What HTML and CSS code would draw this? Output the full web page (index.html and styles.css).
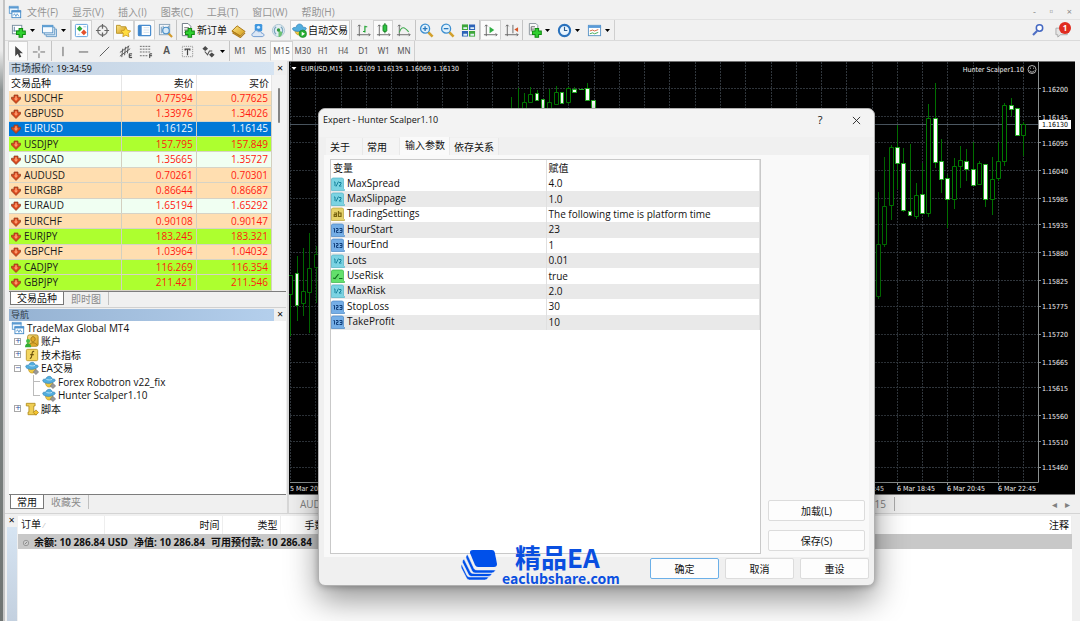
FILE: index.html
```html
<!DOCTYPE html>
<html lang="zh-CN">
<head>
<meta charset="utf-8">
<title>TradeMax Global MT4</title>
<link rel="stylesheet" href="styles.css">
</head>
<body>
<svg class="defs" aria-hidden="true">
  <defs>
    <linearGradient id="goldG" x1="0" y1="0" x2="1" y2="1"><stop offset="0" stop-color="#fbe58a"/><stop offset="1" stop-color="#d49a14"/></linearGradient>
    <symbol id="plus" viewBox="0 0 10 10"><path d="M3.300.7h3.400v2.600h2.600v3.400H6.700v2.600H3.300V6.700H.7V3.300h2.600z" fill="#2fd02f" stroke="#128a12" stroke-width="1"/></symbol>
    <symbol id="windows" viewBox="0 0 16 16"><rect x="1.500" y="1.500" width="10" height="8" fill="#eef6fd" stroke="#5c9bd1"/><path d="M1 3h11" stroke="#5c9bd1" stroke-width="2"/><rect x="4.500" y="6.500" width="10" height="8" fill="#fff" stroke="#3d84c4"/><path d="M4 7.500h11" stroke="#4f93cf" stroke-width="2"/><path d="M6 12l1.500-2L9 13l1.500-3 2 3" fill="none" stroke="#4f93cf"/></symbol>
    <symbol id="down" viewBox="0 0 10 10"><path d="M3 1h4v2.200h2.500V5L5 9.500.500 5V3.200H3z" fill="#d8481c" stroke="#8e3a1c" stroke-width=".7"/><path d="M4.200 2.200h1.600v2.300h1.400L5 7 2.800 4.500h1.400z" fill="#ff9c6e"/></symbol>
    <symbol id="ea" viewBox="0 0 16 16"><path d="M4 9c0 6 7 6 8 2V8H4z" fill="#edc844" stroke="#b98d18" stroke-width=".7"/><path d="M1 5.500c-1 3 4 4.500 8 4s6.500-2.500 6-4c-1-1.300-2.500-.8-3.500-1C11 0 5 1 4.500 4.500 3 5 1.500 4.500 1 5.500z" fill="#52aede" stroke="#2f7fb4" stroke-width=".7"/><path d="M5 5c2 1 5 .8 6.500 0" stroke="#c7e9fa" fill="none"/><path d="M12.500 9.500l3 3-3 3-3-3z" fill="#999" stroke="#6f6f6f" stroke-width=".7"/></symbol>
    <symbol id="half" viewBox="0 0 14 14"><path d="M1.500 1h10l1 1v9.500l1 1V13.500H.5V2z" fill="#7bd3e2" stroke="#55b3c6" stroke-width=".7"/><path d="M3 5h1v4M5 9.500L7.500 4.500M8 5.500h2v1.500L8 9h2.500" stroke="#17829c" fill="none"/></symbol>
    <symbol id="num" viewBox="0 0 14 14"><path d="M1.500 1h10l1 1v9.500l1 1V13.500H.5V2z" fill="#75aee6" stroke="#4a86c4" stroke-width=".7"/><path d="M2.500 5.500h1v4M5 5.500h2v2H5.500v2H7.500M8.500 5.500h2.500v4H8.500M9 7.500h2" stroke="#123f7a" fill="none"/></symbol>
    <symbol id="str" viewBox="0 0 14 14"><path d="M1.500 1h10l1 1v9.500l1 1V13.500H.5V2z" fill="#e5d26a" stroke="#b9a038" stroke-width=".7"/><path d="M3 6h2.500v3.500H3.200V7.700h2.300M7.500 4v5.500H10V6H7.500" stroke="#77620f" fill="none" stroke-width="1.200"/></symbol>
    <symbol id="bool" viewBox="0 0 14 14"><path d="M1.500 1h10l1 1v9.500l1 1V13.500H.5V2z" fill="#63e06b" stroke="#38b145" stroke-width=".7"/><path d="M2 9l2 .5L7.500 5M8 9.500h3.500" stroke="#126f20" fill="none" stroke-width="1.200"/></symbol>
  </defs>
</svg>

<div class="app">
  <nav class="menubar">
    <svg class="i14"><use href="#windows"/></svg>
    <button>文件(F)</button><button>显示(V)</button><button>插入(I)</button><button>图表(C)</button><button>工具(T)</button><button>窗口(W)</button><button>帮助(H)</button>
    <span class="winctl"><button>-</button><button>▫</button><button>×</button></span>
  </nav>

  <div class="toolbar">
    <div class="group">
      <button class="tb" aria-label="新图表"><svg class="i16" viewBox="0 0 16 16"><rect x="1.500" y="2.500" width="10" height="9" fill="#fff" stroke="#7a8f9f"/><path d="M3.500 4v5M2.500 8.500h7" stroke="#5a7f9f"/><use href="#plus" x="5" y="5" width="11" height="11"/></svg></button>
      <button class="caret" aria-label="更多"><svg viewBox="0 0 5 3"><path d="M0 0h5L2.500 3z"/></svg></button>
      <button class="tb" aria-label="配置"><svg class="i16" viewBox="0 0 16 16"><path d="M4.500 12.500v2h11v-8h-2" fill="#d5e7f5" stroke="#6b9dc7"/><path d="M2.500 10.500v2h11v-8h-2" fill="#e5f0f9" stroke="#6b9dc7"/><rect x=".5" y="2.500" width="11" height="8" fill="#f6fbff" stroke="#5590c4"/><path d="M0 3.500h12" stroke="#5d9fd4" stroke-width="2"/></svg></button>
      <button class="caret" aria-label="更多"><svg viewBox="0 0 5 3"><path d="M0 0h5L2.500 3z"/></svg></button>
    </div>
    <div class="group views">
      <button class="tb on" aria-label="市场报价"><svg class="i16" viewBox="0 0 16 16"><rect x="1.500" y="1.500" width="13" height="13" rx="1" fill="#fff" stroke="#5c9fdd"/><path d="M6 3l3 3-3 3-3-3z" fill="#2dab3f"/><path d="M10.500 7l3 3-3 3-3-3z" fill="#e4512b"/><path d="M4 12h2M10 4h3" stroke="#9fc2e2"/></svg></button>
      <button class="tb" aria-label="数据窗口"><svg class="i16" viewBox="0 0 16 16"><circle cx="8" cy="8" r="5" fill="none" stroke="#777" stroke-width="1.500"/><path d="M8 1v5M8 10v5M1 8h5M10 8h5" stroke="#666" stroke-width="1.300"/></svg></button>
      <button class="tb on" aria-label="导航"><svg class="i16" viewBox="0 0 16 16"><path d="M.5 2.500h4l1 1.500h5v7H.5z" fill="url(#goldG)" stroke="#b9942c"/><path d="M10.500 4.500l1.700 3.300 3.500.6-2.500 2.600.5 3.600-3.200-1.600-3.200 1.600.5-3.600-2.500-2.600 3.500-.6z" fill="#ffdc3e" stroke="#c4921c" stroke-width=".8"/></svg></button>
      <button class="tb on" aria-label="终端"><svg class="i16" viewBox="0 0 16 16"><rect x="1.500" y="2.500" width="13" height="11" rx="1" fill="#fff" stroke="#4a8dcf" stroke-width="1.300"/><path d="M3.500 3v10" stroke="#3f86cc" stroke-width="3"/><path d="M7 5h6M7 7.500h6M7 10h6" stroke="#d5e1ec"/></svg></button>
      <button class="tb" aria-label="测试"><svg class="i16" viewBox="0 0 16 16"><rect x="1.500" y="1.500" width="11" height="11" fill="#f5f8fb" stroke="#8aa3b8"/><path d="M3.500 4v7M5.500 3v7M11 3v3" stroke="#6f94b4"/><path d="M11 11l4 4" stroke="#d29a2c" stroke-width="2.200"/><circle cx="8.500" cy="8" r="3.500" fill="#cfe6f7" fill-opacity=".8" stroke="#4a90c9" stroke-width="1.200"/></svg></button>
    </div>
    <div class="group trade">
      <button class="tb wide"><svg class="i16" viewBox="0 0 16 16"><path d="M2.500.5h6l3 3v10h-9z" fill="#fff" stroke="#6c7681"/><path d="M4.500 5h5M4.500 7.500h4M4.500 10h3" stroke="#6b6b6b"/><use href="#plus" x="5" y="5" width="11" height="11"/></svg>新订单</button>
      <button class="tb" aria-label="编辑器"><svg class="i16" viewBox="0 0 16 16"><path d="M1 8.500L6.500 3l8.500 6-5 5z" fill="url(#goldG)" stroke="#a87410"/><path d="M1 8.500l9 5.500M1.500 10.500l8.500 5 5-5" fill="none" stroke="#b07c16" stroke-width="1.200"/></svg></button>
      <button class="tb" aria-label="云"><svg class="i16" viewBox="0 0 16 16"><rect x="4" y="1" width="8" height="8" rx="1.500" fill="#3f97df"/><circle cx="8" cy="4.500" r="1.700" fill="#d5edff"/><path d="M3 14.500c-3-.3-2.500-4 0-4 .5-3 4-3 5-1 2-1 3.500.3 3.500 1.500 3 0 3 3.300.5 3.500z" fill="#dce7f5" stroke="#6d99cf"/></svg></button>
      <button class="tb" aria-label="信号"><svg class="i16" viewBox="0 0 16 16"><circle cx="8" cy="8" r="6.500" fill="#e3edf2" stroke="#a9c3d1"/><path d="M5.500 12a5 5 0 010-8M10.500 12a5 5 0 000-8" fill="none" stroke="#7ba6c0" stroke-width="1.300"/><path d="M8 8v7c3.500-.5 4-3.500 4-5.500z" fill="#6cc274"/><circle cx="8" cy="7.500" r="1.800" fill="#329a3f"/></svg></button>
      <button class="tb wide on auto"><svg class="i16" viewBox="0 0 16 16"><path d="M3 8c1 7 9 6 10 0z" fill="#edc844" stroke="#b98d18" stroke-width=".7"/><path d="M.7 5.500c-.7 3 4 3.500 7.500 3.500s7-1 7-3.500c-1-1.300-2.500-.8-3.500-1C11 0 5 0 4.500 4.500 3 5 1.500 4.500.7 5.500z" fill="#52aede" stroke="#2f7fb4" stroke-width=".7"/><circle cx="11.500" cy="11.500" r="4" fill="#27ae32" stroke="#158220" stroke-width=".6"/><path d="M10.300 9.200l3.500 2.300-3.500 2.300z" fill="#fff"/></svg>自动交易</button>
    </div>
    <div class="group types">
      <button class="tb" aria-label="柱状图"><svg class="i16" viewBox="0 0 16 16"><path d="M3.500 2v12M1 12.500h14M2 3.500l1.500-1.500L5 3.500M13.500 11L15 12.500 13.500 14" fill="none" stroke="#666"/><path d="M9.500 3v7M9.500 4H12M7.500 9h2" stroke="#19a12c" stroke-width="1.200"/></svg></button>
      <button class="tb on" aria-label="阴阳烛"><svg class="i16" viewBox="0 0 16 16"><path d="M3.500 2v12M1 12.500h14M2 3.500l1.500-1.500L5 3.500M13.500 11L15 12.500 13.500 14" fill="none" stroke="#666"/><path d="M9.500 0v11" stroke="#137a20"/><rect x="7.500" y="2" width="4" height="7" rx="1" fill="#2ec343" stroke="#158220"/></svg></button>
      <button class="tb" aria-label="折线图"><svg class="i16" viewBox="0 0 16 16"><path d="M3.500 2v12M1 12.500h14M2 3.500l1.500-1.500L5 3.500M13.500 11L15 12.500 13.500 14" fill="none" stroke="#666"/><path d="M3.500 10C6 3 9 4 13.500 9.500" fill="none" stroke="#3eaa4d" stroke-width="1.200"/></svg></button>
    </div>
    <div class="group line">
      <button class="tb21" aria-label="放大"><svg class="i16" viewBox="0 0 16 16"><path d="M9.500 9.500l5 5" stroke="#d2a02c" stroke-width="2.800"/><circle cx="6.500" cy="6" r="4.800" fill="#e0f1fc" stroke="#3d8fd0" stroke-width="1.400"/><path d="M4 6h5M6.500 3.500v5" stroke="#2978bd" stroke-width="1.400"/></svg></button>
      <button class="tb21" aria-label="缩小"><svg class="i16" viewBox="0 0 16 16"><path d="M9.500 9.500l5 5" stroke="#d2a02c" stroke-width="2.800"/><circle cx="6.500" cy="6" r="4.800" fill="#e0f1fc" stroke="#3d8fd0" stroke-width="1.400"/><path d="M4 6h5" stroke="#2978bd" stroke-width="1.400"/></svg></button>
      <button class="tb21" aria-label="平铺"><svg class="i16" viewBox="0 0 16 16"><path d="M1 1.500h6.500v6H1z" fill="#3ea63a"/><path d="M8.500 1.500H15v6H8.500zM1 8.500h6.500v6H1z" fill="#2c62b8"/><path d="M8.500 8.500H15v6H8.500z" fill="#3ea63a"/><path d="M2.500 5.500h4M10 5.500h4M2.500 12.500h4M10 12.500h4" stroke="#dff0f3" stroke-width="2"/></svg></button>
    </div>
    <div class="group line">
      <button class="tb21 on" aria-label="自动滚动"><svg class="i16" viewBox="0 0 16 16"><path d="M3.500 2v12M1 12.500h14M2 3.500l1.500-1.500L5 3.500M13.500 11L15 12.500 13.500 14" fill="none" stroke="#666"/><path d="M7 4l5 3.500L7 11z" fill="#2fae42"/></svg></button>
      <button class="tb21" aria-label="图表平移"><svg class="i16" viewBox="0 0 16 16"><path d="M3.500 2v12M1 12.500h14M2 3.500l1.500-1.500L5 3.500M13.500 11L15 12.500 13.500 14M9.500 2v9" fill="none" stroke="#666"/><path d="M15 4.500v5l-4-2.500z" fill="#d65628"/></svg></button>
    </div>
    <div class="group line last">
      <button class="tb" aria-label="指标"><svg class="i16" viewBox="0 0 16 16"><path d="M2.500.5h7l2 2v10h-9z" fill="#f9f9f9" stroke="#8a949c"/><path d="M4.500 9V4h4M4.500 6.500h3" fill="none" stroke="#666"/><use href="#plus" x="5" y="5" width="11" height="11"/></svg></button>
      <button class="caret" aria-label="更多"><svg viewBox="0 0 5 3"><path d="M0 0h5L2.500 3z"/></svg></button>
      <button class="tb" aria-label="周期"><svg class="i16" viewBox="0 0 16 16"><circle cx="8" cy="8" r="6" fill="#e9f4fd" stroke="#2a72bd" stroke-width="2.200"/><path d="M8 4v4h3" stroke="#2d5e92" fill="none" stroke-width="1.200"/></svg></button>
      <button class="caret" aria-label="更多"><svg viewBox="0 0 5 3"><path d="M0 0h5L2.500 3z"/></svg></button>
      <button class="tb" aria-label="模板"><svg class="i16" viewBox="0 0 16 16"><rect x="1.500" y="2.500" width="13" height="11" fill="#fff" stroke="#5c94c6"/><path d="M1 4h14" stroke="#5a9bd8" stroke-width="2.500"/><path d="M3 8.500l3-1 2 1 4-1.500" stroke="#d2643c" fill="none"/><path d="M3 11.500l3-1 2 1 4-1.500" stroke="#3ea852" fill="none"/></svg></button>
      <button class="caret" aria-label="更多"><svg viewBox="0 0 5 3"><path d="M0 0h5L2.500 3z"/></svg></button>
    </div>
    <div class="tools-right">
      <button class="tb" aria-label="搜索"><svg class="i14" viewBox="0 0 14 14"><path d="M6 8l-4 4" stroke="#4f6fc4" stroke-width="2.200"/><circle cx="8.500" cy="5" r="3.200" fill="#fff" stroke="#4468c2" stroke-width="1.500"/></svg></button>
      <button class="tb note" aria-label="通知"><svg class="i16" viewBox="0 0 16 16"><path d="M1 5.500h12v7H6L3 15v-2.500H1z" fill="#e5e5e5" stroke="#aaa"/></svg><span class="badge">1</span></button>
    </div>
  </div>

  <div class="toolbar second">
    <div class="group pointers">
      <button class="tb on" aria-label="光标"><svg class="i16" viewBox="0 0 16 16"><path d="M4.500 2v11l2.700-2.500 1.800 4 2-1-1.800-3.700h3.500z" fill="#444"/></svg></button>
      <button class="tb" aria-label="十字"><svg class="i16" viewBox="0 0 16 16"><path d="M8.500 2v5M8.500 10v5M2 8.500h5M10 8.500h5" stroke="#666"/></svg></button>
    </div>
    <div class="group line draw">
      <button aria-label="垂直线"><svg class="i16" viewBox="0 0 16 16"><path d="M8.500 3v10" stroke="#555"/></svg></button>
      <button aria-label="水平线"><svg class="i16" viewBox="0 0 16 16"><path d="M3 8.500h10" stroke="#555"/></svg></button>
      <button aria-label="趋势线"><svg class="i16" viewBox="0 0 16 16"><path d="M3 13L13 3" stroke="#555"/></svg></button>
      <button aria-label="通道"><svg class="i16" viewBox="0 0 16 16"><path d="M2 9L12 2M2 13L13 5M5 5l-1 9M8 3l-1 9M11 2l-1 8" stroke="#555"/><path d="M15 10.500h-3v4h3M12 12.500h2.500" stroke="#333" fill="none"/></svg></button>
      <button aria-label="斐波纳契"><svg class="i16" viewBox="0 0 16 16"><path d="M2 2.500h12M2 5.500h12M2 8.500h12M2 12.500h8" stroke="#666" stroke-dasharray="2 1"/><path d="M12.500 15v-4.500H15M12.500 12.500H15" stroke="#333" fill="none"/></svg></button>
      <button class="glyph">A</button>
      <button aria-label="标签"><svg class="i16" viewBox="0 0 16 16"><rect x="2.500" y="2.500" width="11" height="11" fill="none" stroke="#888" stroke-dasharray="1 1"/><path d="M5 5.500h6M8 5v7M5.500 5v2M10.500 5v2" stroke="#444" stroke-width="1.300"/></svg></button>
    </div>
    <div class="group">
      <button class="tb" aria-label="箭头"><svg class="i16" viewBox="0 0 16 16"><path d="M1.500 5L4.500 2l3 3-3 2.500zM8.500 11.500l3-2.500 3 2.500-3 3z" fill="#4b4b4b"/><path d="M4 8l3 3.500 2-4 3 0" stroke="#555" stroke-width="1.200" fill="none"/></svg></button>
      <button class="caret" aria-label="更多"><svg viewBox="0 0 5 3"><path d="M0 0h5L2.500 3z"/></svg></button>
    </div>
    <div class="group line periods">
      <button>M1</button><button>M5</button><button class="on">M15</button><button>M30</button><button>H1</button><button>H4</button><button>D1</button><button>W1</button><button>MN</button>
    </div>
  </div>

  <div class="workspace">
    <aside class="side">
      <section class="panel">
        <header class="ptitle"><span class="cap">市场报价: <b>19:34:59</b></span><button class="x" aria-label="关闭">✕</button></header>
        <div class="watch">
          <table class="quotes">
            <thead><tr><th class="sym">交易品种</th><th>卖价</th><th>买价</th></tr></thead>
            <tbody>
              <tr class="or"><td><svg><use href="#down"/></svg>USDCHF</td><td>0.77594</td><td>0.77625</td></tr>
              <tr class="or"><td><svg><use href="#down"/></svg>GBPUSD</td><td>1.33976</td><td>1.34026</td></tr>
              <tr class="sel"><td><svg><use href="#down"/></svg>EURUSD</td><td>1.16125</td><td>1.16145</td></tr>
              <tr class="gr"><td><svg><use href="#down"/></svg>USDJPY</td><td>157.795</td><td>157.849</td></tr>
              <tr class="mi"><td><svg><use href="#down"/></svg>USDCAD</td><td>1.35665</td><td>1.35727</td></tr>
              <tr class="or"><td><svg><use href="#down"/></svg>AUDUSD</td><td>0.70261</td><td>0.70301</td></tr>
              <tr class="or"><td><svg><use href="#down"/></svg>EURGBP</td><td>0.86644</td><td>0.86687</td></tr>
              <tr class="mi"><td><svg><use href="#down"/></svg>EURAUD</td><td>1.65194</td><td>1.65292</td></tr>
              <tr class="or"><td><svg><use href="#down"/></svg>EURCHF</td><td>0.90108</td><td>0.90147</td></tr>
              <tr class="gr"><td><svg><use href="#down"/></svg>EURJPY</td><td>183.245</td><td>183.321</td></tr>
              <tr class="or"><td><svg><use href="#down"/></svg>GBPCHF</td><td>1.03964</td><td>1.04032</td></tr>
              <tr class="gr"><td><svg><use href="#down"/></svg>CADJPY</td><td>116.269</td><td>116.354</td></tr>
              <tr class="gr"><td><svg><use href="#down"/></svg>GBPJPY</td><td>211.421</td><td>211.546</td></tr>
            </tbody>
          </table>
          <div class="scroll"><i></i></div>
        </div>
        <div class="ptabs"><button class="cur">交易品种</button><button>即时图</button></div>
      </section>
      <section class="panel nav">
        <header class="ptitle deep"><span class="cap">导航</span><button class="x" aria-label="关闭">✕</button></header>
        <ul class="tree">
          <li><svg class="i14"><use href="#windows"/></svg>TradeMax Global MT4</li>
          <li class="l1"><span class="pm">+</span><svg class="i14" viewBox="0 0 16 16"><rect x="3" y="1" width="12" height="13" rx="2" fill="url(#goldG)" stroke="#a8841a"/><path d="M9 3c4 0 3 6 0 6s-3-6 0-6M5 13c1-4 7-4 9 0" fill="#e0a92a" stroke="#9b7412"/><circle cx="3.500" cy="8" r="2.300" fill="#44c044"/><path d="M0 15c0-6 7-6 7 0z" fill="#2fae34"/></svg>账户</li>
          <li class="l1"><span class="pm">+</span><svg class="i14" viewBox="0 0 16 16"><rect x="1.500" y="1.500" width="13" height="13" rx="1.500" fill="#f3d660" stroke="#b89628"/><path d="M10.500 4c-2-.7-2.300 1-2.500 3s-.5 5-2.500 5M6 7.500h4" fill="none" stroke="#6b520e" stroke-width="1.300"/></svg>技术指标</li>
          <li class="l1"><span class="pm">−</span><svg class="i14"><use href="#ea"/></svg>EA交易</li>
          <li class="l2"><span class="elbow"></span><svg class="i14"><use href="#ea"/></svg>Forex Robotron v22_fix</li>
          <li class="l2"><span class="elbow end"></span><svg class="i14"><use href="#ea"/></svg>Hunter Scalper1.10</li>
          <li class="l1"><span class="pm">+</span><svg class="i14" viewBox="0 0 16 16"><path d="M1.500 1.500h10v3H10v7h3v3H3.500v-3h1v-7h-3z" fill="#efce55" stroke="#b38f20"/><path d="M12.500 9l3 3-3 3-3-3z" fill="#f3c32e" stroke="#a87d14" stroke-width=".8"/></svg>脚本</li>
        </ul>
        <div class="ptabs"><button class="cur">常用</button><button>收藏夹</button></div>
      </section>
    </aside>

    <main class="chartarea">
      <svg class="chart" viewBox="289 62 786 432" preserveAspectRatio="xMaxYMin slice">
        <path class="grid" d="M290.500 62V482M315.500 62V482M341.500 62V482M366.500 62V482M391.500 62V482M417.500 62V482M442.500 62V482M467.500 62V482M492.500 62V482M518.500 62V482M543.500 62V482M568.500 62V482M594.500 62V482M619.500 62V482M644.500 62V482M669.500 62V482M695.500 62V482M720.500 62V482M745.500 62V482M771.500 62V482M796.500 62V482M821.500 62V482M846.500 62V482M872.500 62V482M897.500 62V482M922.500 62V482M947.500 62V482M973.500 62V482M998.500 62V482M1023.500 62V482"/>
        <path class="grid" d="M290 88.500H1038M290 116.500H1038M290 142.500H1038M290 170.500H1038M290 198.500H1038M290 224.500H1038M290 252.500H1038M290 280.500H1038M290 306.500H1038M290 334.500H1038M290 362.500H1038M290 387.500H1038M290 415.500H1038M290 441.500H1038M290 467.500H1038"/>
        <path class="price" d="M290 124.500H1038"/>
        <path class="wick" d="M290.500 275V336M297.500 256V321M303.500 248V316M309.500 233V333M316.500 246V303M511.500 97V108M518.500 88V108M524.500 93V108M530.500 87V103M537.500 90V100M549.500 89V108M556.500 86V104M568.500 87V104M574.500 87V92M587.500 83V100M878.500 192V299M884.500 157V247M891.500 145V220M897.500 125V189M903.500 148V212M910.500 144V215M916.500 183V219M922.500 163V214M928.500 104V217M935.500 83V168M941.500 139V193M947.500 175V228M954.500 158V209M960.500 146V188M966.500 149V181M973.500 142V186M979.500 161V185M985.500 164V207M992.500 157V215M998.500 142V181M1004.500 103V166M1011.500 98V116M1023.500 122V156"/>
        <path class="hollow" d="M288.500 275.500h4v19h-4zM301.500 291.500h4v12h-4zM307.500 268.500h4v24h-4zM314.500 254.500h4v13h-4zM522.500 102.500h4v10h-4zM528.500 94.500h4v8h-4zM547.500 102.500h4v9h-4zM554.500 92.500h4v12h-4zM566.500 88.500h4v14h-4zM876.500 244.500h4v52h-4zM882.500 206.500h4v38h-4zM889.500 147.500h4v58h-4zM914.500 195.500h4v21h-4zM926.500 118.500h4v95h-4zM952.500 166.500h4v33h-4zM958.500 160.500h4v6h-4zM977.500 163.500h4v21h-4zM990.500 179.500h4v20h-4zM996.500 161.500h4v17h-4zM1002.500 105.500h4v56h-4zM1021.500 124.500h4v11h-4z"/>
        <path class="solid" d="M295.500 273.500h3v32h-3zM535.500 93.500h3v7h-3zM541.500 99.500h3v10h-3zM560.500 92.500h3v11h-3zM572.500 89.500h4v3h-4zM579 89.500h5M585.500 88.500h4v12h-4zM591.500 100.500h4v10h-4zM895.500 147.500h4v16h-4zM901.500 163.500h4v47h-4zM908.500 211.500h3v4h-3zM920.500 194.500h4v19h-4zM933.500 118.500h4v44h-4zM939.500 161.500h4v18h-4zM945.500 178.500h4v21h-4zM964.500 161.500h4v8h-4zM971.500 169.500h4v16h-4zM983.500 164.500h4v35h-4zM1009.500 105.500h4v4h-4zM1015.500 108.500h4v27h-4z"/>
        <path class="axis" d="M1038.500 62V482.500H290M1038 88.500h3M1038 116.500h3M1038 142.500h3M1038 170.500h3M1038 198.500h3M1038 224.500h3M1038 252.500h3M1038 280.500h3M1038 306.500h3M1038 334.500h3M1038 362.500h3M1038 387.500h3M1038 415.500h3M1038 441.500h3M1038 467.500h3M897.500 482v3M947.500 482v3M998.500 482v3"/>
        <path d="M291.500 67h5l-2.500 3z" fill="#fff"/>
        <text x="301" y="71">EURUSD,M15&#160;&#160; 1.16109 1.16135 1.16069 1.16130</text>
        <text x="1024" y="72" text-anchor="end">Hunter Scalper1.10</text>
        <g fill="none" stroke="#ddd" stroke-width=".8"><circle cx="1032" cy="69.500" r="4"/><path d="M1029.700 70.500c1 2 3.600 2 4.600 0M1030.500 67.700v1M1033.500 67.700v1"/></g>
        <rect x="1039" y="120" width="32" height="9" fill="#fff"/>
        <g>
          <text x="1042" y="92">1.16200</text><text x="1042" y="120">1.16145</text><text x="1042" y="146">1.16095</text><text x="1042" y="174">1.16040</text><text x="1042" y="202">1.15985</text><text x="1042" y="228">1.15935</text><text x="1042" y="256">1.15880</text><text x="1042" y="284">1.15825</text><text x="1042" y="309">1.15775</text><text x="1042" y="337">1.15720</text><text x="1042" y="365">1.15665</text><text x="1042" y="391">1.15615</text><text x="1042" y="419">1.15560</text><text x="1042" y="445">1.15510</text><text x="1042" y="470">1.15460</text>
          <text x="1042" y="127" class="now">1.16130</text>
          <text x="290" y="491">5 Mar 2026</text><text x="846" y="491">6 Mar 16:45</text><text x="897" y="491">6 Mar 18:45</text><text x="947" y="491">6 Mar 20:45</text><text x="998" y="491">6 Mar 22:45</text>
        </g>
      </svg>
      <div class="ctabs"><button>AUDUSD,M15</button><button class="lasttab">DAX,M15</button><span class="arrows"><button aria-label="左">◂</button><button aria-label="右">▸</button></span></div>
    </main>
  </div>

  <section class="terminal">
    <div class="tstrip"><button class="x" aria-label="关闭">✕</button></div>
    <div class="twrap">
      <table class="orders">
        <thead><tr><th class="c1">订单 <small>⁄</small></th><th class="c2">时间</th><th class="c3">类型</th><th class="c4">手数</th><th>注释</th></tr></thead>
        <tbody><tr><td colspan="5"><svg class="dot" viewBox="0 0 8 8"><circle cx="4" cy="4" r="2.700" fill="#ccc" stroke="#999"/><path d="M3 5l2-2" stroke="#888"/></svg><span>余额: 10 286.84 USD</span><span>净值: 10 286.84</span><span>可用预付款: 10 286.84</span></td></tr></tbody>
      </table>
    </div>
  </section>
</div>

<div class="dialog" role="dialog" aria-label="Expert">
  <header class="dtitle"><span>Expert - Hunter Scalper1.10</span><button aria-label="帮助">?</button><button aria-label="关闭"><svg viewBox="0 0 10 10"><path d="M1 1l8 8M9 1L1 9" stroke="#222"/></svg></button></header>
  <div class="dtabs"><button>关于</button><button>常用</button><button class="cur">输入参数</button><button>依存关系</button></div>
  <div class="dbody">
    <div class="list">
      <table class="params">
        <thead><tr><th>变量</th><th>赋值</th></tr></thead>
        <tbody>
          <tr><td><svg><use href="#half"/></svg>MaxSpread</td><td>4.0</td></tr>
          <tr><td><svg><use href="#half"/></svg>MaxSlippage</td><td>1.0</td></tr>
          <tr><td><svg><use href="#str"/></svg>TradingSettings</td><td>The following time is platform time</td></tr>
          <tr><td><svg><use href="#num"/></svg>HourStart</td><td>23</td></tr>
          <tr><td><svg><use href="#num"/></svg>HourEnd</td><td>1</td></tr>
          <tr><td><svg><use href="#half"/></svg>Lots</td><td>0.01</td></tr>
          <tr><td><svg><use href="#bool"/></svg>UseRisk</td><td>true</td></tr>
          <tr><td><svg><use href="#half"/></svg>MaxRisk</td><td>2.0</td></tr>
          <tr><td><svg><use href="#num"/></svg>StopLoss</td><td>30</td></tr>
          <tr><td><svg><use href="#num"/></svg>TakeProfit</td><td>10</td></tr>
        </tbody>
      </table>
    </div>
    <div class="sidebtns"><button class="btn">加载(L)</button><button class="btn">保存(S)</button></div>
  </div>
  <footer class="dfoot"><button class="btn ok">确定</button><button class="btn">取消</button><button class="btn">重设</button></footer>
  <div class="brand">
    <svg viewBox="0 0 36 31"><path d="M12 0h19q2 0 2.700 2l2.300 12q0 3-3 3H17q-2 0-3-2L9 3q-.5-3 3-3z" fill="#0050ea"/><path d="M6.500 4.500l6.500 14q.7 1.500 3 1.500h18.500q-1 3-4 3H14q-2 0-3-2L5 8q-.5-2 1.500-3.500zM3 9l6.500 13q.7 1.500 3 1.500H31q-1 3-4 3H10.500q-2 0-3-2L1.500 12.500Q1 10.500 3 9zM.5 14L6 25.500Q7 27 9 27h18.500q-1 3-4 3H8.500q-2 0-3-2L.3 18Q-.3 16 .5 14z" fill="#0050ea" stroke="#f6f6f6" stroke-width=".5"/></svg>
    <div><strong>精品EA</strong><em>eaclubshare.com</em></div>
  </div>
</div>
</body>
</html>
```
FILE: styles.css
```css
* { box-sizing: border-box; }
html, body { height: 100%; }
body {
  margin: 0;
  overflow: hidden;
  font: 10px/14px "Open Sans", "Noto Sans CJK SC", sans-serif;
  color: #111;
  background: linear-gradient(#ececec 0 50px, #8d9494 90px, #6f7472);
  padding-left: 3px;
}
button { font: inherit; color: inherit; border: 0; background: none; padding: 0; margin: 0; display: flex; align-items: center; justify-content: center; white-space: nowrap; }
table { border-collapse: collapse; table-layout: fixed; }
th { font-weight: 400; }
th, td { padding: 0; white-space: nowrap; }
svg { flex: none; }
.defs { position: absolute; width: 0; height: 0; }
.i14 { width: 14px; height: 14px; }
.i16 { width: 15px; height: 15px; }

.app { height: 100%; display: flex; flex-direction: column; background: #f0f0f0; border-left: 2px solid #c4c4c4; }

.menubar { display: flex; align-items: center; gap: 14px; height: 20px; padding: 4px 8px 0 3px; color: #949494; background: #f1f1f1; border-bottom: 1px solid #e2e2e2; }
.menubar > svg { margin-right: -9px; }
.winctl { margin-left: auto; display: flex; gap: 11px; color: #888; font-size: 9px; }

.toolbar { display: flex; height: 21px; padding-left: 3px; border-bottom: 1px solid #dadada; background: #f1f1f1; }
.toolbar.second { height: 20px; border-bottom: 0; }
.group { display: flex; align-items: stretch; }
.tb { width: 20px; }
.tb21, .views .tb { width: 21px; }
.caret { width: 11px; }
.caret svg { width: 5px; height: 3px; margin-right: 3px; }
.last .caret { width: 10px; }
.on { background: #fbfbfb; border: 1px solid #d2d2d2; border-bottom-color: #f0f0f0; }
.line, .views { border-left: 1px solid #c4c4c4; }
.trade { border-left: 1px solid #c4c4c4; padding-left: 2px; width: 175px; }
.tb.wide { width: 49px; gap: 2px; }
.tb.auto { width: 60px; margin-left: auto; margin-right: 1px; gap: 1px; }
.types { border-left: 1px solid #c4c4c4; width: 64px; padding-left: 1px; }
.last { border-right: 1px solid #cfcfcf; padding-left: 1px; }
.tools-right { margin-left: auto; margin-right: 8px; display: flex; gap: 4px; }
.note { position: relative; }
.badge { position: absolute; right: 1px; top: 2px; width: 12px; height: 12px; border-radius: 50%; background: #e02c20; color: #fff; font: 700 8px/12px "Open Sans", sans-serif; text-align: center; }
.pointers { width: 43px; }
.draw { width: 147px; }
.draw button, .periods button { flex: 1; }
.glyph { font: 700 10px/14px "Liberation Sans", sans-serif; color: #555; }
.periods { width: 186px; border-right: 1px solid #cfcfcf; color: #555; font-size: 8px; font-family: "Noto Sans", sans-serif; }

.workspace { flex: 1; display: flex; min-height: 0; padding-right: 5px; }
.side { width: 284px; flex: none; display: flex; flex-direction: column; padding: 1px 1px 0 4px; border-right: 2px solid #d8d8d8; }
.panel { display: flex; flex-direction: column; }
.ptitle { display: flex; height: 13px; }
.cap { flex: 1; background: linear-gradient(90deg, #c3d2e2, #d6e4f2); padding-left: 2px; line-height: 12px; font-size: 10px; color: #2f3b47; white-space: pre; }
.cap b { font-weight: 400; font-size: 9px; color: #000; }
.deep .cap { background: linear-gradient(90deg, #95b2d2, #b4cfec); line-height: 11px; font-size: 9px; }
.x { width: 12px; font: 8px/12px "DejaVu Sans", sans-serif; color: #111; }
.watch { display: flex; background: #fff; }
.quotes { flex: 1; height: 216px; }
.quotes th { height: 16px; text-align: right; padding-right: 2px; border-right: 1px solid #e6e6e6; line-height: 15px; }
.quotes .sym { width: 112px; text-align: left; padding-left: 2px; }
.quotes td { text-align: right; padding-right: 3px; line-height: 13px; color: #ff1a10; border-right: 1px solid #d3d0c0; border-bottom: 1px solid #d6d3c6; }
.quotes td:first-child { text-align: left; color: #1a1a1a; padding-left: 2px; }
.quotes td svg { width: 10px; height: 10px; vertical-align: -2px; margin-right: 3px; }
.or { background: #ffdeb0; }
.gr { background: #adff2f; }
.mi { background: #f0fff2; }
.sel { background: #0078d7; }
.quotes .sel td, .quotes .sel td:first-child { color: #f2f8ff; }
.scroll { width: 14px; background: #f3f3f3; display: flex; justify-content: center; padding-top: 13px; }
.scroll i { width: 2px; height: 35px; border-radius: 1px; background: #858585; }
.ptabs { display: flex; height: 14px; border-top: 1px solid #7d7d7d; padding-left: 1px; color: #8a8a8a; }
.ptabs button { padding: 0 7px; line-height: 12px; }
.ptabs .cur { padding: 0 6px; background: #fff; color: #111; border: 1px solid #777; border-top: 0; }
.ptabs button:last-child { border-right: 1px solid #c0c0c0; }
.nav { flex: 1; margin-top: 2px; border-top: 1px solid #d0d0d0; padding-top: 1px; min-height: 0; }
.nav .ptitle { height: 12px; }
.nav .ptabs { height: 15px; margin-bottom: 4px; }
.tree { list-style: none; margin: 0; padding: 0 0 0 2px; flex: 1; background: #fff; min-height: 0; display: grid; grid-template-rows: repeat(3, 13px 14px) 13px; align-content: start; }
.tree li { display: flex; align-items: center; gap: 2px; }
.tree .l1 { padding-left: 3px; }
.tree .l2 { padding-left: 22px; }
.pm { width: 7px; height: 7px; margin-right: 2px; border: 1px solid #a8a8a8; background: #fff; color: #2a4ea0; font: 7px/5px "DejaVu Sans", sans-serif; text-align: center; }
.elbow { width: 7px; align-self: stretch; background: linear-gradient(#bbb, #bbb) 0 50% / 100% 1px no-repeat, linear-gradient(#bbb, #bbb) 0 0 / 1px 100% no-repeat; }
.elbow.end { background-size: 100% 1px, 1px 50%; }

.chartarea { flex: 1; min-width: 0; display: flex; flex-direction: column; border-top: 1px solid #6f6f6f; }
.chart { flex: 1; width: 100%; min-height: 0; background: #000; border-bottom: 1px solid #777; }
.chart text { font: 7px "DejaVu Sans Condensed", "DejaVu Sans", sans-serif; fill: #f0f0f0; }
.chart .now { fill: #000; }
.grid { stroke: #30363c; stroke-dasharray: 2 1; fill: none; }
.price { stroke: #4c5862; }
.axis { stroke: #8a8f8f; fill: none; }
.wick { stroke: #006f00; }
.hollow { stroke: #007a00; fill: #000; }
.solid { stroke: #1fae1f; fill: #fff; }
.ctabs { display: flex; height: 18px; color: #808080; align-items: center; padding-left: 11px; }
.lasttab { margin-left: auto; padding-right: 8px; border-right: 1px solid #aaa; }
.arrows { display: flex; width: 180px; justify-content: flex-end; gap: 8px; padding-right: 5px; }

.terminal { height: 108px; display: flex; border-top: 1px solid #d4d4d4; padding-right: 8px; }
.tstrip { width: 13px; flex: none; padding: 1px 1px 0 2px; display: flex; flex-direction: column; }
.tstrip::after { content: ""; flex: 1; background: linear-gradient(#d6e4f2, #c3d0df); }
.tstrip .x { width: 9px; height: 12px; }
.twrap { flex: 1; min-width: 0; background: #fff; border-top: 2px solid #f0f0f0; }
.orders { width: 100%; }
.orders th { height: 16px; line-height: 16px; text-align: right; padding-right: 2px; border-right: 1px solid #eee; }
.orders .c1 { width: 86px; text-align: left; padding-left: 3px; }
.orders small { color: #aaa; font-size: 7px; }
.orders .c2 { width: 118px; }
.orders .c3 { width: 58px; }
.orders .c4 { width: 47px; }
.orders td { height: 15px; background: #c8c8c8; font-weight: 700; line-height: 14px; }
.orders span { margin-right: 6px; }
.dot { width: 8px; height: 8px; margin: 0 4px; vertical-align: -1px; }

.dialog { position: absolute; left: 318px; top: 108px; width: 557px; background: #f0f0f0; border-radius: 7px; border: 1px solid #b0b0b0; box-shadow: 0 14px 32px rgba(0, 0, 0, .42), 0 1px 6px rgba(0, 0, 0, .25); padding: 0 5px; }
.dtitle { display: flex; align-items: center; height: 28px; margin: 0 -5px; padding: 0 9px 6px 4px; background: #f3f3f3; border-radius: 7px 7px 0 0; font-size: 9px; }
.dtitle span { flex: 1; }
.dtitle button { width: 18px; margin-left: 18px; font-size: 11px; }
.dtitle svg { width: 9px; height: 9px; }
.dtabs { display: flex; align-items: flex-end; height: 18px; padding-left: 2px; }
.dtabs button { height: 17px; padding: 0 12px 0 4px; background: #f4f4f4; border-right: 1px solid #e8e8e8; }
.dtabs .cur { height: 18px; padding: 0 4px 2px 5px; background: #fafafa; }
.dtabs button:last-child { padding: 0 4px; }
.dbody { display: flex; background: #f9f9f9; padding: 4px 4px 3px 6px; gap: 7px; }
.list { flex: 1; height: 395px; background: #fff; border: 1px solid #c9c9c9; }
.params { width: 100%; height: 170px; }
.params th { text-align: left; height: 16px; padding-left: 2px; line-height: 16px; border-right: 1px solid #e8e8e8; }
.params th:first-child { width: 215px; }
.params td { padding-left: 2px; border-right: 1px solid #e0e0e0; line-height: 13px; }
.params td:first-child { padding-left: 0; }
.params tbody tr:nth-child(even) { background: #e9e9e9; }
.params td svg { width: 14px; height: 14px; vertical-align: -4px; margin-right: 2px; }
.params th, .params td { border-right-color: #e0e0e0; }
.sidebtns { width: 97px; display: flex; flex-direction: column; justify-content: flex-end; gap: 9px; padding-bottom: 3px; }
.btn { height: 21px; background: #fdfdfd; border: 1px solid #dcdcdc; border-radius: 2px; }
.dfoot { display: flex; justify-content: flex-end; gap: 6px; padding: 1px 0 6px; }
.dfoot .btn { width: 69px; }
.dfoot .btn.ok { border-color: #6cb0e8; }
.brand { position: absolute; left: 142px; top: 433px; display: flex; gap: 5px; color: #0a4fe0; }
.brand svg { width: 36px; height: 31px; margin-top: 8px; }
.brand div { display: flex; flex-direction: column; font-family: "Noto Sans CJK SC", sans-serif; }
.brand strong { font-size: 26px; line-height: 30px; padding-left: 13px; }
.brand em { font-style: normal; font-weight: 700; font-size: 14px; line-height: 13px; }
```
